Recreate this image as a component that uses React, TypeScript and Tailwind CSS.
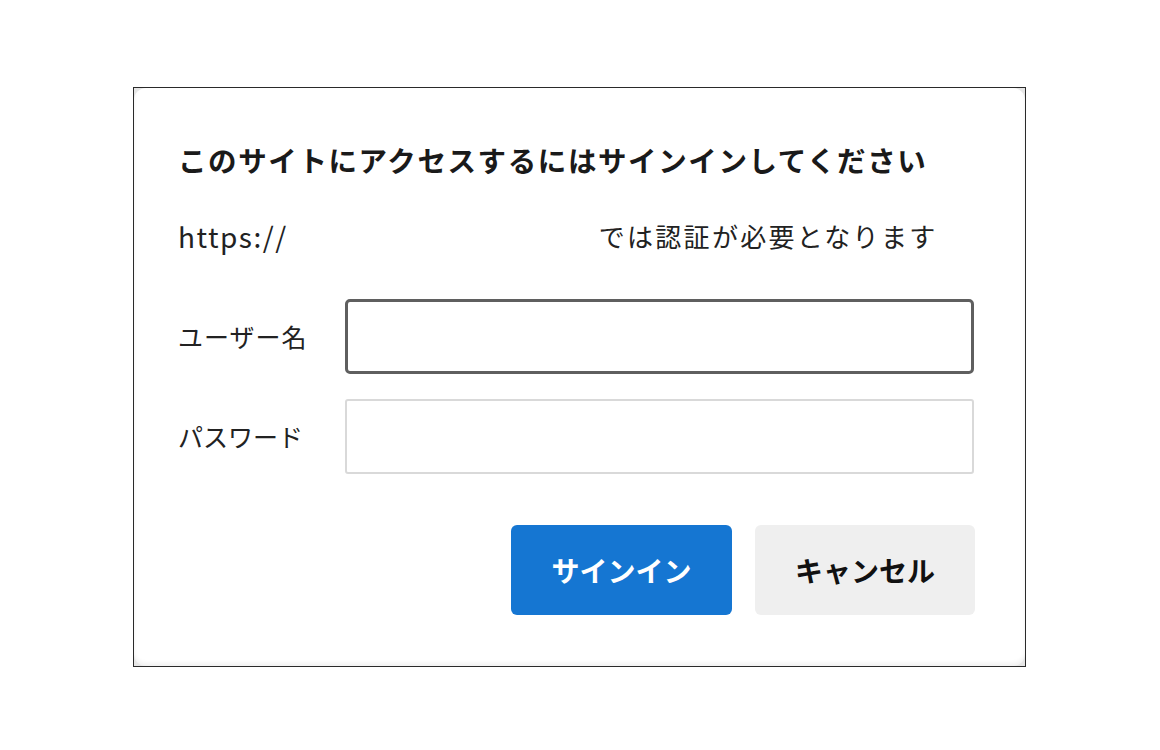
export default function App() {
  const font = { fontFamily: '"Noto Sans CJK JP", "Noto Sans", sans-serif' };
  return (
    <div className="w-[1160px] h-[750px] bg-white pt-[87px] pl-[133px]" style={font}>
      <div className="w-[893px] h-[580px] border border-[#2a2a2a] bg-[#e6e6e6]">
        <div className="w-full h-full rounded-[12px] bg-white shadow-[inset_0_-3px_4px_rgba(0,0,0,0.06)] pl-[44px] pr-[50px] pt-[51px] text-[#1c1c1c]">
          <h1 className="text-[28.5px] leading-[42px] font-bold tracking-[1.6px] text-[#1a1a1a]">
            このサイトにアクセスするにはサインインしてください
          </h1>
          <div className="mt-[35px] flex items-center text-[26px] leading-[40px] text-[#222]">
            <span className="text-[28px] tracking-[1.5px]">https://</span>
            <span className="ml-[311px] tracking-[2.3px]">では認証が必要となります</span>
          </div>
          <div className="mt-[43px] flex flex-col gap-[25px]">
            <div className="flex items-center">
              <label className="w-[167px] text-[25px] tracking-[1px] text-[#222]">ユーザー名</label>
              <input
                type="text"
                className="w-[629px] h-[75px] rounded-[5px] border-[3px] border-[#5f5f5f] bg-white px-3 outline-none"
              />
            </div>
            <div className="flex items-center">
              <label className="w-[167px] text-[25px] text-[#222]">パスワード</label>
              <input
                type="password"
                className="w-[629px] h-[75px] rounded-[3px] border-2 border-[#d9d9d9] bg-white px-3 outline-none"
              />
            </div>
          </div>
          <div className="mt-[51px] flex justify-end gap-[23px]">
            <button className="w-[221px] h-[90px] rounded-[6px] bg-[#1576d2] text-white text-[28px] font-bold">
              サインイン
            </button>
            <button className="w-[220px] h-[90px] rounded-[6px] bg-[#efefef] text-[#111] text-[28px] font-bold">
              キャンセル
            </button>
          </div>
        </div>
      </div>
    </div>
  );
}
